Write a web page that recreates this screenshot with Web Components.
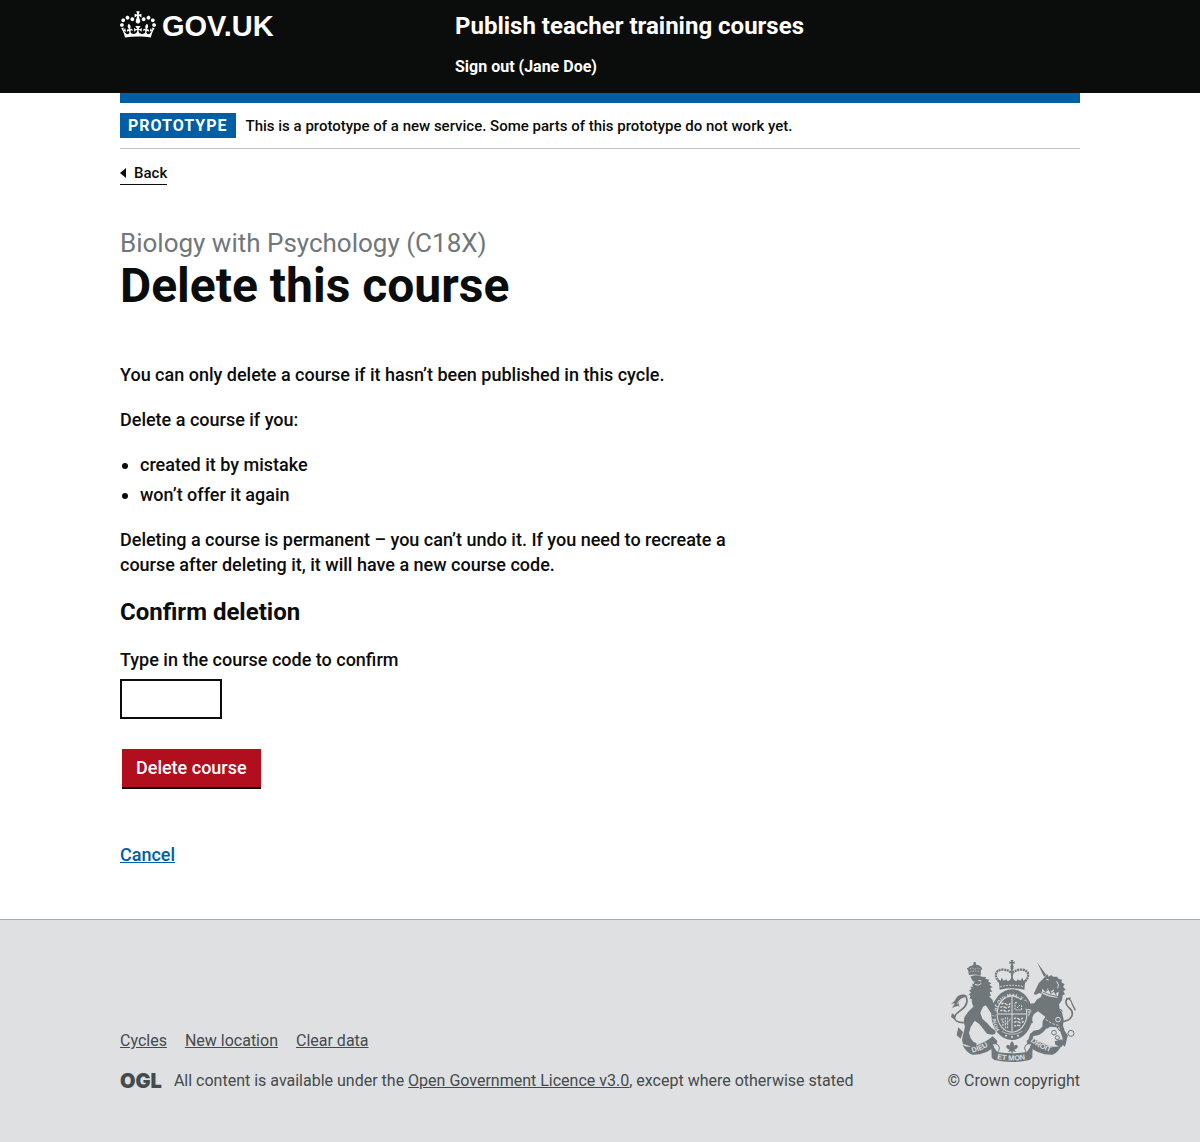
<!DOCTYPE html>
<html lang="en">
<head>
<meta charset="utf-8">
<meta name="viewport" content="width=device-width, initial-scale=1">
<title>Delete this course – Publish teacher training courses</title>
<style>
  :root {
    --black: #0b0c0c;
    --blue: #005ea5;
    --red: #b10e1e;
    --grey: #6f777b;
    --rule: #bfc1c3;
    --footer: #dee0e2;
    --footer-text: #454a4c;
  }
  body {
    margin: 0;
    min-height: 100vh;
    display: flex;
    flex-direction: column;
    background: #fff;
    color: var(--black);
    font: 500 18px/25px Roboto, "Liberation Sans", sans-serif;
  }
  main { display: block; flex: 1; padding-bottom: 52px; }
  p { margin: 0 0 20px; }
  ul { margin: 0 0 20px; padding-left: 20px; display: grid; gap: 5px; }
</style>
</head>
<body>
<site-header>
  <span slot="service">Publish teacher training courses</span>
  <span slot="account">Sign out (Jane Doe)</span>
</site-header>
<page-width>
  <phase-banner phase="Prototype">This is a prototype of a new service. Some parts of this prototype do not work yet.</phase-banner>
  <back-link>Back</back-link>
  <main>
    <page-heading>
      <span slot="caption">Biology with Psychology (C18X)</span>
      Delete this course
    </page-heading>
    <reading-column>
      <p>You can only delete a course if it hasn’t been published in this cycle.</p>
      <p>Delete a course if you:</p>
      <ul>
        <li>created it by mistake</li>
        <li>won’t offer it again</li>
      </ul>
      <p>Deleting a course is permanent – you can’t undo it. If you need to recreate a course after deleting it, it will have a new course code.</p>
      <confirm-deletion>
        <span slot="heading">Confirm deletion</span>
        <span slot="label">Type in the course code to confirm</span>
        <span slot="submit">Delete course</span>
        <span slot="cancel">Cancel</span>
      </confirm-deletion>
    </reading-column>
  </main>
</page-width>
<site-footer></site-footer>

<script>
const define = (name, html) => {
  const template = document.createElement('template');
  template.innerHTML = '<style>*{box-sizing:border-box}</style>' + html;
  customElements.define(name, class extends HTMLElement {
    constructor() {
      super();
      this.attachShadow({ mode: 'open' }).append(template.content.cloneNode(true));
    }
    connectedCallback() {
      for (const node of this.shadowRoot.querySelectorAll('[data-attr]')) {
        node.textContent = this.getAttribute(node.dataset.attr) || '';
      }
    }
  });
};

define('page-width', `
<style>
  :host { display: block; box-sizing: border-box; width: 100%; max-width: 1020px; margin: 0 auto; padding: 0 30px; }
</style>
<slot></slot>`);

define('reading-column', `
<style>:host { display: block; max-width: 640px; }</style>
<slot></slot>`);

define('crown-mark', `
<style>:host { display: block; } svg { display: block; width: 36px; height: 27px; fill: currentColor; }</style>
<svg viewBox="0 0 132 97" aria-hidden="true"><path fill-rule="evenodd" d="M25 30.2c3.5 1.5 7.7-.2 9.1-3.7 1.5-3.6-.2-7.8-3.9-9.2-3.6-1.4-7.6.3-9.1 3.9-1.4 3.5.3 7.5 3.9 9zM9 39.5c3.6 1.5 7.8-.2 9.2-3.7 1.5-3.6-.2-7.8-3.9-9.1-3.6-1.5-7.6.2-9.1 3.8-1.4 3.5.3 7.5 3.8 9zM4.4 57.2c3.5 1.5 7.7-.2 9.1-3.8 1.5-3.6-.2-7.7-3.9-9.1-3.5-1.5-7.6.3-9.1 3.8-1.4 3.5.3 7.6 3.9 9.1zm38.3-21.4c3.5 1.5 7.7-.2 9.1-3.8 1.5-3.6-.2-7.7-3.9-9.1-3.6-1.5-7.6.3-9.1 3.8-1.3 3.6.4 7.7 3.9 9.1zm64.4-5.6c-3.6 1.5-7.8-.2-9.1-3.7-1.5-3.6.2-7.8 3.8-9.2 3.6-1.4 7.7.3 9.2 3.9 1.3 3.5-.4 7.5-3.9 9zm15.9 9.3c-3.6 1.5-7.7-.2-9.1-3.7-1.5-3.6.2-7.8 3.7-9.1 3.6-1.5 7.7.2 9.2 3.8 1.5 3.5-.3 7.5-3.8 9zm4.7 17.7c-3.6 1.5-7.8-.2-9.2-3.8-1.5-3.6.2-7.7 3.9-9.1 3.6-1.5 7.7.3 9.2 3.8 1.3 3.5-.4 7.6-3.9 9.1zM89.3 35.8c-3.6 1.5-7.8-.2-9.2-3.8-1.4-3.6.2-7.7 3.9-9.1 3.6-1.5 7.7.3 9.2 3.8 1.4 3.6-.3 7.7-3.9 9.1zM69.7 17.7l8.9 4.7V9.3l-8.9 2.8c-.2-.3-.5-.6-.9-.9L72.4 0H59.6l3.5 11.2c-.3.3-.6.5-.9.9l-8.8-2.8v13.1l8.8-4.7c.3.3.6.7.9.9l-5 15.4v.1c-.2.8-.4 1.6-.4 2.4 0 4.1 3.1 7.5 7 8.1h.2c.3 0 .7.1 1 .1.4 0 .7 0 1-.1h.2c4-.6 7.1-4.1 7.1-8.1 0-.8-.1-1.7-.4-2.4V34l-5.1-15.4c.4-.2.7-.6 1-.9zM66 92.8c16.9 0 32.8 1.1 47.1 3.2 4-16.9 8.9-26.7 14-33.5l-9.6-3.4c1 4.9 1.1 7.2 0 10.2-1.5-1.4-3-4.3-4.2-8.7L108.6 76c2.8-2 5-3.2 7.5-3.3-4.4 9.4-10 11.9-13.6 11.2-4.3-.8-6.3-4.6-5.6-7.9 1-4.7 5.7-5.9 8-.5 4.3-8.7-3-11.4-7.6-8.8 7.1-7.2 7.9-13.5 2.1-21.1-8 6.1-8.1 12.3-4.5 20.8-4.7-5.4-12.1-2.5-9.5 6.2 3.4-5.2 7.9-2 7.2 3.1-.6 4.3-6.4 7.8-13.5 7.2-10.3-.9-10.9-8-11.2-13.8 2.5-.5 7.1 1.8 11 7.3L80.2 60c-4.1 4.4-8 5.3-12.3 5.4 1.4-4.4 8-11.6 8-11.6H55.5s6.4 7.2 7.9 11.6c-4.2-.1-8-1-12.3-5.4l1.4 16.4c3.9-5.5 8.5-7.7 10.9-7.3-.3 5.8-.9 12.8-11.1 13.8-7.2.6-12.9-2.9-13.5-7.2-.7-5 3.8-8.3 7.1-3.1 2.7-8.7-4.6-11.6-9.4-6.2 3.7-8.5 3.6-14.7-4.6-20.8-5.8 7.6-5 13.9 2.2 21.1-4.7-2.6-11.9.1-7.7 8.8 2.3-5.5 7.1-4.2 8.1.5.7 3.3-1.3 7.1-5.7 7.9-3.5.7-9-1.8-13.5-11.2 2.5.1 4.7 1.3 7.5 3.3l-4.7-15.4c-1.2 4.4-2.7 7.2-4.3 8.7-1.1-3-.9-5.3 0-10.2l-9.5 3.4c5 6.9 9.9 16.7 14 33.5 14.8-2.1 30.8-3.2 47.7-3.2z"/></svg>`);

define('site-header', `
<style>
  :host { display: block; background: var(--black); color: #fff; }
  .bar { display: grid; grid-template-columns: 1fr 2fr; padding: 11px 0 16px; }
  a { color: inherit; text-decoration: none; }
  .logo { display: flex; align-items: center; gap: 6px; justify-self: start; height: 30px; font-weight: 700; font-size: 29px; line-height: 30px; font-family: "Liberation Sans", sans-serif; }
  crown-mark { padding-bottom: 3px; }
  .content { display: flex; flex-direction: column; align-items: flex-start; gap: 16px; padding-left: 15px; }
  .service { font-weight: 700; font-size: 24px; line-height: 30px; }
  .account { font-weight: 700; font-size: 16px; line-height: 20px; }
</style>
<header>
  <page-width>
    <div class="bar">
      <a class="logo" href="#"><crown-mark></crown-mark><span>GOV.UK</span></a>
      <div class="content">
        <a class="service" href="#"><slot name="service"></slot></a>
        <a class="account" href="#"><slot name="account"></slot></a>
      </div>
    </div>
  </page-width>
</header>`);

define('phase-banner', `
<style>
  :host { display: flex; align-items: center; gap: 10px; padding: 10px 0; border-top: 10px solid var(--blue); border-bottom: 1px solid var(--rule); font-size: 15px; line-height: 20px; }
  strong { background: var(--blue); color: #fff; padding: 0 8px; font-weight: 700; font-size: 16px; line-height: 25px; letter-spacing: 1px; text-transform: uppercase; }
</style>
<strong data-attr="phase"></strong><span><slot></slot></span>`);

define('back-link', `
<style>
  :host { display: block; margin-top: 14px; font-size: 15px; line-height: 20px; }
  a { display: inline-flex; align-items: center; gap: 8px; padding-bottom: 1px; border-bottom: 1px solid var(--black); color: var(--black); text-decoration: none; vertical-align: top; }
  svg { width: 6px; height: 10px; fill: currentColor; }
</style>
<a href="#"><svg viewBox="0 0 6 10" aria-hidden="true"><path d="M0 5 6 0v10z"/></svg><slot></slot></a>`);

define('page-heading', `
<style>
  :host { display: block; margin: 43px 0 48px; }
  h1 { margin: 0; font-weight: 700; font-size: 48px; line-height: 56px; }
  .caption { display: block; font-weight: 400; font-size: 26px; line-height: 30px; color: var(--grey); }
</style>
<h1><span class="caption"><slot name="caption"></slot></span><slot></slot></h1>`);

define('confirm-deletion', `
<style>
  :host { display: block; }
  form { display: flex; flex-direction: column; align-items: flex-start; }
  h2 { margin: 0 0 20px; font-weight: 700; font-size: 24px; line-height: 30px; }
  label { margin-bottom: 7px; }
  input { width: 102px; height: 40px; padding: 5px; border: 2px solid var(--black); border-radius: 0; background: #fff; font: inherit; }
  button { margin: 30px 2px 55px; padding: 6px 14px 7px; border: 0; border-radius: 0; background: var(--red); color: #fff; box-shadow: 0 2px 0 var(--black); font: inherit; }
  a { color: var(--blue); text-decoration: underline; }
</style>
<form onsubmit="return false">
  <h2><slot name="heading"></slot></h2>
  <label for="code"><slot name="label"></slot></label>
  <input id="code" name="code" type="text" autocomplete="off">
  <button type="submit"><slot name="submit"></slot></button>
  <a href="#"><slot name="cancel"></slot></a>
</form>`);

define('royal-arms', `
<style>
  :host { display: block; color: var(--grey); }
  svg { display: block; width: 125px; height: 102px; fill: currentColor; }
  text { fill: var(--footer); font: 700 15px "Liberation Sans", sans-serif; }
  .line { fill: none; stroke: currentColor; }
  .light { fill: var(--footer); }
  .cut { fill: none; stroke: var(--footer); }
</style>
<svg viewBox="36 30 375 306" role="img" aria-label="Royal coat of arms">
  <defs>
    <path id="garter" d="M182 240A49 60 0 1 1 258 238"/>
    <path id="left" d="M100 308Q134 301 164 276"/>
    <path id="mid" d="M174 327Q219 336 270 326"/>
    <path id="right" d="M274 274Q300 298 348 309"/>
  </defs>
  <!-- crown -->
  <path d="M215 30h8l-2 6 6-2v8l-6-2 3 11h-10l3-11-6 2v-8l6 2z"/>
  <circle cx="219" cy="54" r="5"/>
  <path class="line" stroke-width="7" stroke-dasharray="6 2" d="M186 101C160 78 170 58 192 59c14 0 23 6 27 13 4-7 13-13 27-13 22-1 32 19 6 42"/>
  <path class="line" stroke-width="5" d="M219 56v32"/>
  <path d="M180 99l-4-12 9 5 3-9 6 9 8-4 4 6 7-4 6-10 6 10 7 4 4-6 8 4 6-9 3 9 9-5-4 12-2 20q-37-8-74 0z"/>
  <path class="cut" stroke-width="3" stroke-dasharray="5 4" d="M184 110q35-8 70 0"/>
  <!-- garter and shield -->
  <ellipse cx="219" cy="194" rx="62" ry="76"/>
  <ellipse class="light" cx="219" cy="192" rx="46" ry="56"/>
  <ellipse cx="219" cy="192" rx="43" ry="53"/>
  <path class="cut" stroke-width="3" d="M219 140v105M177 192h84"/>
  <path class="cut" stroke-width="4" stroke-dasharray="7 3 10 4" d="M187 162q8-5 15 1t12-4M184 172q8-4 14 0t15-3M184 183q8-5 14 0t15-3M225 206q8-5 14 1t12-4M226 217q8-5 14 0t14-3M226 229q6-4 18-2"/>
  <path class="cut" stroke-width="3" stroke-dasharray="6 3" d="M228 158h20v22h-20zM234 174l12-12M192 204v24M199 202v34M206 202v36M186 206q14 30 28 0"/>
  <text><textPath href="#garter">HONI SOIT QUI MAL Y PENSE</textPath></text>
  <path class="cut" stroke-width="2" d="M188 244q31 18 62 0"/>
  <circle class="light" cx="201" cy="257" r="3"/><circle class="light" cx="219" cy="261" r="3"/><circle class="light" cx="237" cy="257" r="3"/>
  <!-- lion -->
  <path d="M90 75 87 60l-4-5 5-2 5-5 6-1 4-3 1-8h6l1 8 6 1 6 3 4 4 3 4-4 5-1 16q-19-7-35-1z"/>
  <path class="cut" stroke-width="2" stroke-dasharray="5 3" d="M92 66q17-6 33 0M92 57l8-3 7 4 8-4 9 3"/>
  <path d="M94 80q17-8 35 0l12 1-2 5 12 3-4 5 10 6-6 4 10 8-8 3 7 10-8 1 4 12-6 1 10 10 8 20-2 14 8 6-5 9-10-4-9-12-10-16-8 4-8 18 6 18 15 14 12 13 13 9-1 9-9 3-16-3-11-14-12-15-14-10-12 19-5 18 5 16 8 10 10 5-2 10-14 1-12-5-13-4-3-12 2-12 4-14 3-15-4-10 2-17 13-18 14-14-4-11-1-12-7-2 4-7-6-5 7-5-6-7 8-3-4-8 8 0-3-9 7 0z"/>
  <path class="cut" stroke-width="3" d="M96 95l11 1M118 91l9 2M108 103q10 7 19-3M142 170l13 20"/>
  <path class="line" stroke-width="5" stroke-linecap="round" d="M72 218C38 216 43 196 61 184s28-24 21-41"/>
  <path d="M86 139c-12-11-33-4-37 11l-12 12 11-2-9 14 17-7 6 4c-7-12 0-24 13-27z"/>
  <path class="cut" stroke-width="3" d="M78 143q-19 4-22 19"/>
  <path d="m39 190-3 11 8 6 6-9zM58 232l-5 24 12 10 7-20z"/>
  <!-- unicorn -->
  <path d="m294 37 28 38-7 5zM299 100l18-18 8-10 3 8 9-5 5 5 13 0 3 6 11 3-2 8 10 6-5 7 8 9-7 4 5 10-7 3-2 15-9 12 2 14 8 14 4 18-2 18 5 15 9 15-3 14-5 19-10-8 3-18-7-17-12-15-17-2-14 7-9 10-12 8-16 3-8 12-7-4 4-14 11-10 16-3 10-9 1-17 8-13-11-8-11-8-11 7-9 13 5 14-10 4-7-13 5-12 10-16-7-4-13-1-9-9-13-5-1-8 9-5 13 3 11 9 16-1 7-11 13-8 3-9-8-3-10 5-7-2z"/>
  <path class="cut" stroke-width="3" d="m322 88 7 2M353 94q9 10 3 21"/>
  <path class="light" d="m307 129 4-13 8 9 8-10 7 11 10-8 3 13 12-6-3 18q-25 0-49-14z"/>
  <path class="line" stroke-width="3" d="M311 126q21 10 47 14M314 116l5 9 11-7 5 12 12-7 5 13"/>
  <path class="line" stroke-width="5" d="M365 215c38-1 42-28 25-42-14-12-12-31 5-28"/>
  <path class="line" stroke-width="4" d="M381 145c14 0 17 8 19 18l9 18"/>
  <path class="cut" stroke-width="3" stroke-dasharray="7 5" d="M320 208q20 15 38 18l8 34"/>
  <circle class="cut" cx="357" cy="209" r="7" stroke-width="3"/>
  <circle class="line" cx="363" cy="184" r="6" stroke-width="3"/><circle class="line" cx="345" cy="248" r="7" stroke-width="3"/><circle class="line" cx="355" cy="263" r="6" stroke-width="3"/><circle class="line" cx="377" cy="257" r="7" stroke-width="3"/><circle class="line" cx="396" cy="250" r="9" stroke-width="3"/>
  <path d="m347 274 20-6 8 12-8 12-18-8z"/>
  <!-- motto ribbons -->
  <path d="M70 284q20 13 47 0 25-8 44-25l14 14-2 11q-29 31-74 30-18-8-29-30z"/>
  <path d="M368 284q-20 13-47 0-25-8-44-25l-14 14 2 11q29 31 76 30 18-8 27-30z"/>
  <path d="M157 281l18 25q44 8 88 0l18-25-1 42-8 7q-53 12-106 0l-8-7z"/>
  <path class="light" d="m161 283 16-1q5 4 1 20l-4 1zM277 283l-16-1q-5 4-1 20l4 1z"/>
  <path class="line" stroke-width="3" d="M158 280q28 0 22 20l-5 8M280 280q-28 0-22 20l5 8"/>
  <path d="M219 273q10 10 4 19 5-13 13-5 2 8-7 11l-3 1 6 7-10-2-3 7-3-7-10 2 6-7-3-1q-9-3-7-11 8-8 13 5-6-9 4-19z"/>
  <text style="font-size:22px"><textPath href="#left">DIEU</textPath></text>
  <text style="font-size:22px"><textPath href="#mid">ET MON</textPath></text>
  <text style="font-size:22px"><textPath href="#right">DROIT</textPath></text>
</svg>`);

define('site-footer', `
<style>
  :host { display: block; background: var(--footer); border-top: 1px solid #a1acb2; color: var(--footer-text); font-weight: 400; font-size: 16px; line-height: 20px; }
  .row { display: flex; justify-content: space-between; align-items: flex-end; gap: 30px; padding: 40px 0 51px; }
  a { color: inherit; text-decoration: underline; }
  nav { display: flex; flex-wrap: wrap; gap: 18px; margin-bottom: 20px; }
  .licence { display: flex; align-items: center; gap: 12px; }
  .ogl { font-family: Inter, sans-serif; font-weight: 900; font-size: 20px; line-height: 20px; }
  .arms { display: flex; flex-direction: column; align-items: center; gap: 9px; flex: none; text-decoration: none; }
</style>
<footer>
  <page-width>
    <div class="row">
      <div>
        <nav aria-label="Footer"><a href="#">Cycles</a><a href="#">New location</a><a href="#">Clear data</a></nav>
        <div class="licence"><span class="ogl">OGL</span><span>All content is available under the <a href="#">Open Government Licence v3.0</a>, except where otherwise stated</span></div>
      </div>
      <a class="arms" href="#"><royal-arms></royal-arms><span>© Crown copyright</span></a>
    </div>
  </page-width>
</footer>`);
</script>
</body>
</html>
